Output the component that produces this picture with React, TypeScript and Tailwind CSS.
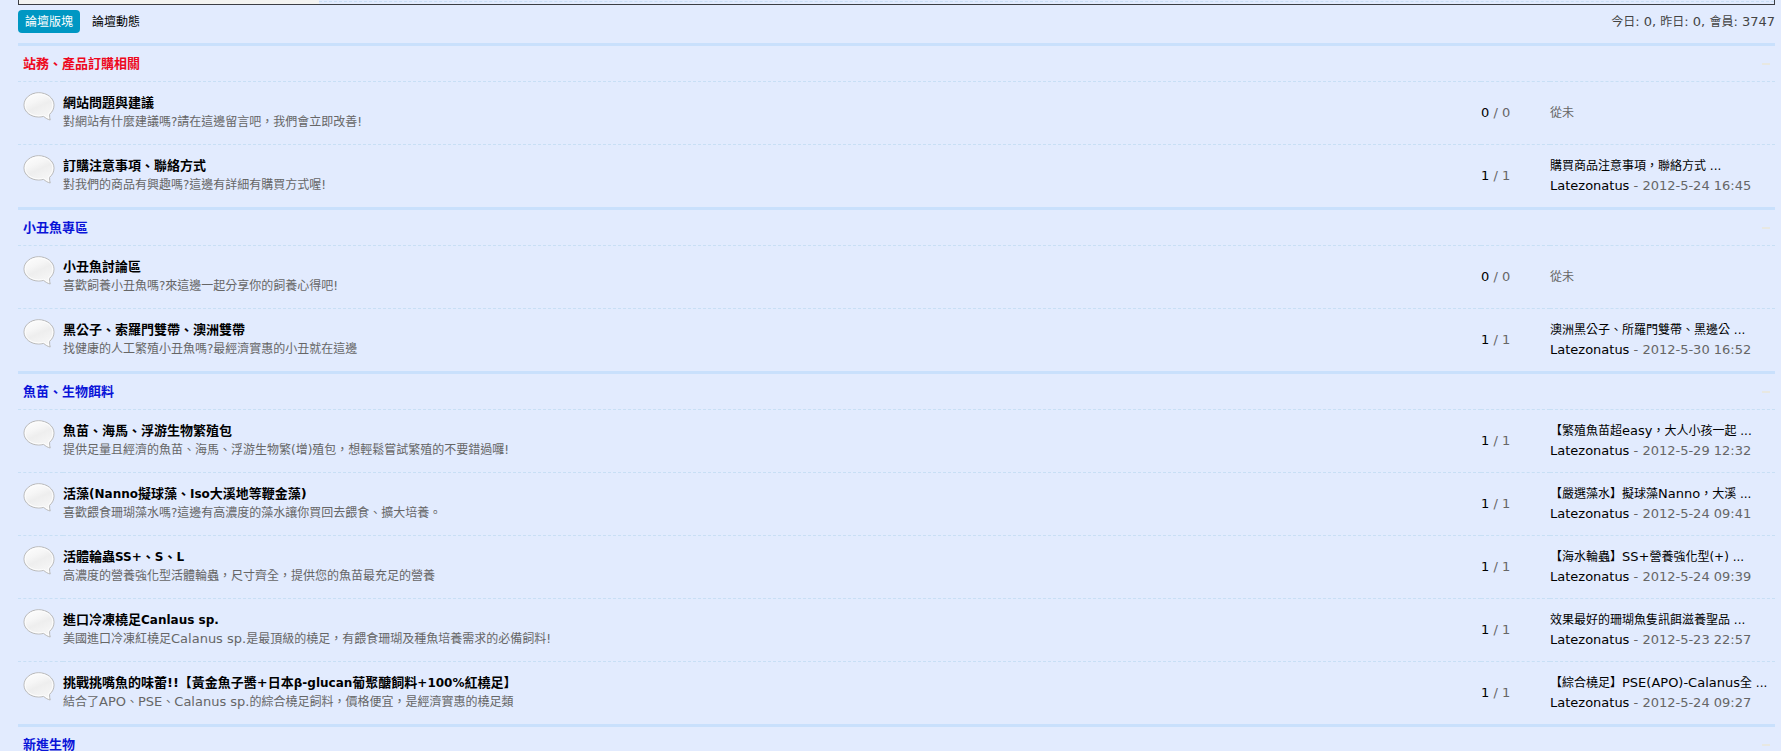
type Forum = {
  title: string;
  text: string;
  threads: number;
  posts: number;
  last?: { title: string; date: string };
};

type Section = { name: string; color: string; forums: Forum[] };

const sections: Section[] = [
  {
    name: "站務、產品訂購相關",
    color: "text-[#ee0820]",
    forums: [
      { title: "網站問題與建議", text: "對網站有什麼建議嗎?請在這邊留言吧，我們會立即改善!", threads: 0, posts: 0 },
      {
        title: "訂購注意事項、聯絡方式",
        text: "對我們的商品有興趣嗎?這邊有詳細有購買方式喔!",
        threads: 1,
        posts: 1,
        last: { title: "購買商品注意事項，聯絡方式 ...", date: "2012-5-24 16:45" },
      },
    ],
  },
  {
    name: "小丑魚專區",
    color: "text-[#0a14d8]",
    forums: [
      { title: "小丑魚討論區", text: "喜歡飼養小丑魚嗎?來這邊一起分享你的飼養心得吧!", threads: 0, posts: 0 },
      {
        title: "黑公子、索羅門雙帶、澳洲雙帶",
        text: "找健康的人工繁殖小丑魚嗎?最經濟實惠的小丑就在這邊",
        threads: 1,
        posts: 1,
        last: { title: "澳洲黑公子、所羅門雙帶、黑邊公 ...", date: "2012-5-30 16:52" },
      },
    ],
  },
  {
    name: "魚苗、生物餌料",
    color: "text-[#0a14d8]",
    forums: [
      {
        title: "魚苗、海馬、浮游生物繁殖包",
        text: "提供足量且經濟的魚苗、海馬、浮游生物繁(增)殖包，想輕鬆嘗試繁殖的不要錯過囉!",
        threads: 1,
        posts: 1,
        last: { title: "【繁殖魚苗超easy，大人小孩一起 ...", date: "2012-5-29 12:32" },
      },
      {
        title: "活藻(Nanno擬球藻、Iso大溪地等鞭金藻)",
        text: "喜歡餵食珊瑚藻水嗎?這邊有高濃度的藻水讓你買回去餵食、擴大培養。",
        threads: 1,
        posts: 1,
        last: { title: "【嚴選藻水】擬球藻Nanno，大溪 ...", date: "2012-5-24 09:41" },
      },
      {
        title: "活體輪蟲SS+、S、L",
        text: "高濃度的營養強化型活體輪蟲，尺寸齊全，提供您的魚苗最充足的營養",
        threads: 1,
        posts: 1,
        last: { title: "【海水輪蟲】SS+營養強化型(+) ...", date: "2012-5-24 09:39" },
      },
      {
        title: "進口冷凍橈足Canlaus sp.",
        text: "美國進口冷凍紅橈足Calanus sp.是最頂級的橈足，有餵食珊瑚及種魚培養需求的必備飼料!",
        threads: 1,
        posts: 1,
        last: { title: "效果最好的珊瑚魚隻訊餌滋養聖品 ...", date: "2012-5-23 22:57" },
      },
      {
        title: "挑戰挑嘴魚的味蕾!!【黃金魚子醬+日本β-glucan葡聚醣飼料+100%紅橈足】",
        text: "結合了APO、PSE、Calanus sp.的綜合橈足飼料，價格便宜，是經濟實惠的橈足類",
        threads: 1,
        posts: 1,
        last: { title: "【綜合橈足】PSE(APO)-Calanus全 ...", date: "2012-5-24 09:27" },
      },
    ],
  },
  { name: "新進生物", color: "text-[#0a14d8]", forums: [] },
];

const latinRun = /([\x20-\x7eβ]*[A-Za-z0-9][\x20-\x7eβ]*)/;

/** Sets the Latin runs of a mixed string in their own size. */
function Mixed({ text, latin = "text-[13px]" }: { text: string; latin?: string }) {
  return (
    <>
      {text.split(latinRun).map((part, i) =>
        i % 2 === 1 ? (
          <span key={i} className={`leading-none ${latin}`}>
            {part}
          </span>
        ) : (
          part
        ),
      )}
    </>
  );
}

function Bubble() {
  return (
    <svg width="32" height="30" viewBox="0 0 32 30" className="block" aria-hidden="true">
      <defs>
        <linearGradient id="bubble" x1="0" y1="0" x2="0.5" y2="1">
          <stop offset="0" stopColor="#ffffff" />
          <stop offset="0.4" stopColor="#f6f6f6" />
          <stop offset="0.6" stopColor="#eeeeee" />
          <stop offset="1" stopColor="#f6f6f6" />
        </linearGradient>
      </defs>
      <path
        d="M15.700 .7C7.700 .7 1 6 1 13C1 20 7.700 25 15.700 25C17.400 25 19 24.800 20.600 24.400C22.500 26 24.700 27.500 27.200 28C26.700 26.400 26.500 24.500 26.600 22.300C29.400 20 31 16.800 31 13C31 6 24 .7 15.700 .7Z"
        fill="url(#bubble)"
        stroke="#b9b9b9"
      />
      <path
        d="M15.700 2C8.400 2 2.200 6.700 2.200 13C2.200 19.300 8.400 23.800 15.700 23.800C17.500 23.800 19.300 23.600 20.900 23.100C22.200 24.300 23.800 25.500 25.600 26.200C25.300 24.600 25.200 23 25.400 21.700C28.100 19.600 29.800 16.600 29.800 13C29.800 6.700 23.300 2 15.700 2Z"
        fill="none"
        stroke="#fdfdfd"
      />
    </svg>
  );
}

const cell = "border-t border-dashed border-[#c8dff5] p-0";

function ForumRow({ forum }: { forum: Forum }) {
  return (
    <tr className="h-[63px]">
      <td className={`w-[45px] align-top ${cell}`}>
        <div className="pt-[10px] pl-[5px]">
          <Bubble />
        </div>
      </td>
      <td className={cell}>
        <div className="flex flex-col gap-px">
          <h3 className="text-[13px] leading-[18px] font-bold text-black">
            <a href="#forum">
              <Mixed text={forum.title} latin="text-[12px]" />
            </a>
          </h3>
          <p>
            <Mixed text={forum.text} />
          </p>
        </div>
      </td>
      <td className={`w-[69px] text-[13px] whitespace-nowrap ${cell}`}>
        <div className="pb-[2px]">
          <span className="text-black">{forum.threads}</span> / {forum.posts}
        </div>
      </td>
      <td className={`w-[225px] whitespace-nowrap ${cell}`}>
        {forum.last ? (
          <>
            <a href="#thread" className="block text-black">
              <Mixed text={forum.last.title} />
            </a>
            <p className="text-[13px]">
              <a href="#author" className="text-black">
                Latezonatus
              </a>{" "}
              - {forum.last.date}
            </p>
          </>
        ) : (
          "從未"
        )}
      </td>
    </tr>
  );
}

export default function App() {
  return (
    <div
      lang="zh-TW"
      className="min-h-screen bg-[#e2ebfe] pr-[6px] pl-[18px] font-['DejaVu_Sans','Noto_Sans_CJK_TC',sans-serif] text-[12px] leading-[19px] text-[#666]"
    >
      <div className="flex h-[5px] border-x border-b border-[#3c3e44]">
        <div className="w-[300px] bg-[#f3f3f1]" />
        <div className="h-[2px] flex-1 border-b border-dashed border-[#c8dff5]" />
      </div>
      <header className="flex h-[38px] items-start justify-between pt-[5px]">
        <nav className="flex gap-[5px] leading-[21px] text-black">
          <a href="#boards" className="rounded-[4px] bg-[#0097c3] px-[7px] pt-[2px] text-white">
            論壇版塊
          </a>
          <a href="#activity" className="px-[7px] pt-[2px]">
            論壇動態
          </a>
        </nav>
        <p className="pt-[2px] leading-[21px] text-[#444]">
          <Mixed text="今日: 0, 昨日: 0, 會員: 3747" />
        </p>
      </header>
      <main>
        {sections.map((section) => (
          <section key={section.name} className="border-t-3 border-[#c9e0fc]">
            <div className="flex h-[35px] items-center justify-between px-[5px]">
              <h2 className={`text-[13px] leading-[20px] font-bold ${section.color}`}>
                <a href="#section">{section.name}</a>
              </h2>
              <button type="button" aria-label="收合" className="flex h-4 w-2 items-center">
                <span className="h-[2px] w-2 bg-[#e8e8e2]" />
              </button>
            </div>
            {section.forums.length > 0 && (
              <table className="w-full border-separate border-spacing-0 text-left">
                <tbody>
                  {section.forums.map((forum) => (
                    <ForumRow key={forum.title} forum={forum} />
                  ))}
                </tbody>
              </table>
            )}
          </section>
        ))}
      </main>
    </div>
  );
}
